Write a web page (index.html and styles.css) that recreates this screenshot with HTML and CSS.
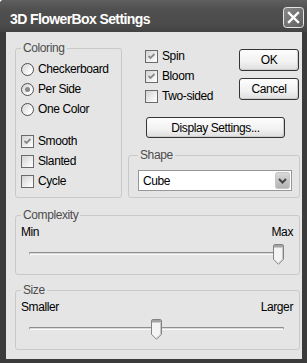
FILE: index.html
```html
<!DOCTYPE html>
<html lang="en">
<head>
    <meta charset="UTF-8">
    <title>3D FlowerBox Settings</title>
    <link rel="stylesheet" href="styles.css">
</head>
<body>
    <div class="window">
        <div class="titlebar">
            <span class="title">3D FlowerBox Settings</span>
            <svg class="close" width="21" height="21" viewBox="0 0 21 21">
                <defs>
                    <linearGradient id="closeFill" x1="0" y1="0" x2="1" y2="1">
                        <stop offset="0" stop-color="#8a8a8a"/>
                        <stop offset="1" stop-color="#5e5e5e"/>
                    </linearGradient>
                </defs>
                <rect x="0.5" y="0.5" width="20" height="20" rx="3" fill="url(#closeFill)" stroke="#e6e6e6"/>
                <path d="M6 6 L15 15 M15 6 L6 15" stroke="#fff" stroke-width="2.4" stroke-linecap="square"/>
            </svg>
        </div>
        <div class="client">
            <div class="top">
                <!-- Coloring options -->
                <fieldset class="group coloring">
                    <legend>Coloring</legend>
                    <div class="options">
                        <label class="opt"><span class="radio"></span>Checkerboard</label>
                        <label class="opt"><span class="radio on"></span>Per Side</label>
                        <label class="opt"><span class="radio"></span>One Color</label>
                    </div>
                    <div class="options checks">
                        <label class="opt"><span class="check"><svg viewBox="0 0 11 11"><path d="M2.5 5 L4.5 7 L8.5 3" /></svg></span>Smooth</label>
                        <label class="opt"><span class="check"></span>Slanted</label>
                        <label class="opt"><span class="check"></span>Cycle</label>
                    </div>
                </fieldset>
                <div class="side">
                    <div class="side-top">
                        <div class="options">
                            <label class="opt"><span class="check"><svg viewBox="0 0 11 11"><path d="M2.5 5 L4.5 7 L8.5 3" /></svg></span>Spin</label>
                            <label class="opt"><span class="check"><svg viewBox="0 0 11 11"><path d="M2.5 5 L4.5 7 L8.5 3" /></svg></span>Bloom</label>
                            <label class="opt"><span class="check"></span>Two-sided</label>
                        </div>
                        <div class="buttons">
                            <button class="btn">OK</button>
                            <button class="btn">Cancel</button>
                        </div>
                    </div>
                    <button class="btn wide">Display Settings...</button>
                    <!-- Shape picker -->
                    <fieldset class="group shape">
                        <legend>Shape</legend>
                        <div class="combo">
                            <span class="combo-text">Cube</span>
                            <svg class="arrow" width="15" height="17" viewBox="0 0 15 17">
                                <defs>
                                    <linearGradient id="arrowFill" x1="0" y1="0" x2="0" y2="1">
                                        <stop offset="0" stop-color="#dadada"/>
                                        <stop offset="1" stop-color="#b2b2b2"/>
                                    </linearGradient>
                                </defs>
                                <rect x="0.5" y="0.5" width="14" height="16" rx="2" fill="url(#arrowFill)" stroke="#c6c6c6"/>
                                <path d="M4 7 L7.5 10.5 L11 7" stroke="#454545" stroke-width="2" fill="none"/>
                            </svg>
                        </div>
                    </fieldset>
                </div>
            </div>
            <!-- Sliders -->
            <fieldset class="group slider-group">
                <legend>Complexity</legend>
                <div class="ends"><span>Min</span><span>Max</span></div>
                <div class="slider">
                    <div class="track"></div>
                    <svg class="thumb" style="--pos: 1" width="11" height="21" viewBox="0 0 11 21">
                        <path d="M0.5 2 Q0.5 0.5 2 0.5 H9 Q10.5 0.5 10.5 2 V15.3 L5.5 20.3 L0.5 15.3 Z" fill="#f4f4f4" stroke="#828282"/>
                        <rect x="1" y="1" width="9" height="2.5" fill="#a2a2a2"/>
                        <path d="M9.5 3.5 V15 L5.5 19" stroke="#c6c6c6" fill="none"/>
                    </svg>
                </div>
            </fieldset>
            <fieldset class="group slider-group size">
                <legend>Size</legend>
                <div class="ends"><span>Smaller</span><span>Larger</span></div>
                <div class="slider">
                    <div class="track"></div>
                    <svg class="thumb" style="--pos: 0.5" width="11" height="21" viewBox="0 0 11 21">
                        <path d="M0.5 2 Q0.5 0.5 2 0.5 H9 Q10.5 0.5 10.5 2 V15.3 L5.5 20.3 L0.5 15.3 Z" fill="#f4f4f4" stroke="#828282"/>
                        <rect x="1" y="1" width="9" height="2.5" fill="#a2a2a2"/>
                        <path d="M9.5 3.5 V15 L5.5 19" stroke="#c6c6c6" fill="none"/>
                    </svg>
                </div>
            </fieldset>
        </div>
    </div>
</body>
</html>
```

FILE: styles.css
```css
/* General styling */
* {
    box-sizing: border-box;
}
body {
    margin: 0;
    background: #fff;
    font-family: "Liberation Sans", Arial, sans-serif;
    font-size: 12px;
    letter-spacing: -0.4px;
    color: #000;
}
.window {
    width: 307px;
    height: 363px;
    display: flex;
    flex-direction: column;
    background: #3b3b3b;
    border-top-left-radius: 4px;
    overflow: hidden;
}
/* Title bar */
.titlebar {
    height: 32px;
    flex: none;
    display: flex;
    align-items: flex-start;
    padding: 7px 3px 0 10px;
    background: linear-gradient(#5f5f5f, #505050 30%, #4a4a4a 80%, #434343);
}
.title {
    margin-top: 4px;
    color: #fff;
    font-size: 14px;
    line-height: 16px;
    font-weight: bold;
    letter-spacing: -0.6px;
}
.close {
    display: block;
    margin-left: auto;
}
.client {
    flex: 1;
    margin: 0 5px 4px 6px;
    padding: 9px 2px 9px 9px;
    background: #e5e5e5;
}
.top {
    display: grid;
    grid-template-columns: 107px 1fr;
    column-gap: 6px;
}
/* Group boxes */
.group {
    margin: 0;
    min-width: 0;
    border: 1px solid #c9c9c9;
    border-radius: 3px;
    padding: 4px 6px 6px 5px;
}
.group legend {
    padding: 0 2px;
    line-height: 14px;
    color: #4c4c4c;
}
.options {
    display: flex;
    flex-direction: column;
}
.opt {
    display: flex;
    align-items: center;
    gap: 4px;
    height: 20px;
    line-height: 20px;
}
.checks {
    margin-top: 12px;
}
.radio {
    position: relative;
    width: 13px;
    height: 13px;
    border-radius: 50%;
    border: 1px solid #505050;
    background: linear-gradient(135deg, #d2d2d2, #fff 80%);
}
.radio.on::after {
    content: "";
    position: absolute;
    left: 3px;
    top: 3px;
    width: 5px;
    height: 5px;
    border-radius: 50%;
    background: #888;
}
.check {
    display: flex;
    width: 13px;
    height: 13px;
    border: 1px solid #6a6a6a;
    background: linear-gradient(135deg, #d2d2d2, #fbfbfb 85%);
}
.check svg {
    width: 11px;
    height: 11px;
}
.check path {
    fill: none;
    stroke: #8a8a8a;
    stroke-width: 1.8;
}
/* Right column */
.side {
    display: flex;
    flex-direction: column;
}
.side-top {
    display: flex;
    height: 65px;
}
.side-top .options {
    padding: 5px 0 0 17px;
}
.buttons {
    display: flex;
    flex-direction: column;
    gap: 7px;
    margin: 0 1px 0 auto;
    padding-top: 8px;
}
.btn {
    width: 60px;
    height: 22px;
    padding: 0;
    font: inherit;
    letter-spacing: inherit;
    color: #000;
    border: 1px solid #353535;
    border-radius: 3px;
    background: linear-gradient(#fdfdfd, #f1f1f1 60%, #dedede);
    box-shadow: inset -1px -1px 0 #cdcdcd;
}
.btn.wide {
    width: auto;
    height: 21px;
    margin: 11px 15px 0 18px;
}
.shape {
    margin-top: 10px;
    padding: 8px 7px 6px 9px;
}
.combo {
    display: flex;
    align-items: center;
    height: 21px;
    padding: 0 1px 0 4px;
    border: 1px solid #979797;
    background: #fff;
}
.combo-text {
    flex: 1;
}
.arrow {
    display: block;
}
/* Sliders */
.slider-group {
    margin-top: 10px;
    padding: 3px 6px 9px 5px;
}
.slider-group.size {
    margin-top: 8px;
}
.ends {
    display: flex;
    justify-content: space-between;
    line-height: 14px;
}
.slider {
    position: relative;
    height: 21px;
    margin: 5px 9px 0 8px;
    padding-top: 8px;
}
.track {
    height: 3px;
    border-top: 1px solid #8e8e8e;
    border-bottom: 1px solid #fafafa;
    border-left: 1px solid #a8a8a8;
    border-right: 1px solid #a8a8a8;
    border-radius: 1px;
    background: #dadada;
}
.thumb {
    position: absolute;
    top: 0;
    left: calc(var(--pos) * (100% - 11px));
}
```
